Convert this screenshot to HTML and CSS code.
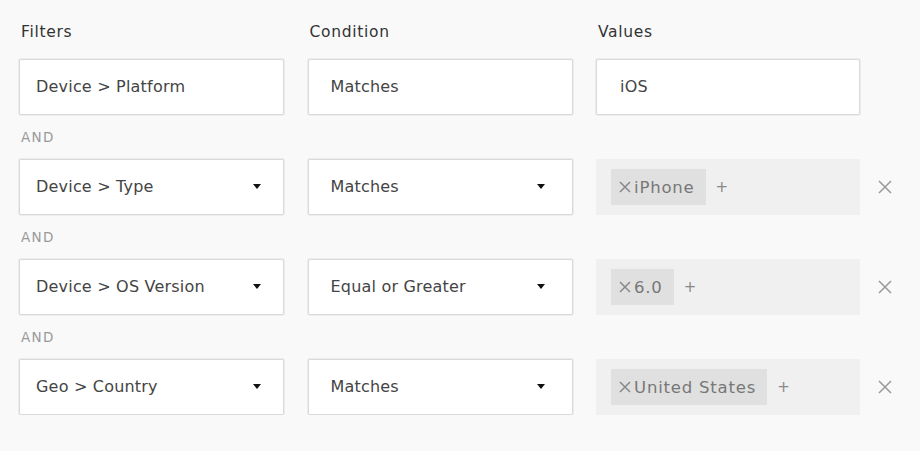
FILE: index.html
```html
<!DOCTYPE html>
<html>
<head>
  <meta charset="utf-8">
  <title>Segment Filters</title>
  <link rel="stylesheet" href="styles.css">
</head>
<body class="sf-page">

<div class="sf-grid">
  <div class="sf-head">Filters</div>
  <div class="sf-head">Condition</div>
  <div class="sf-head">Values</div>
  <div></div>

  <div class="sf-box sf-filter">Device &gt; Platform</div>
  <div class="sf-box sf-cond">Matches</div>
  <div class="sf-box sf-plain">iOS</div>
  <div></div>

  <div class="sf-and">AND</div>

  <div class="sf-box sf-filter">Device &gt; Type <span class="sf-caret"></span></div>
  <div class="sf-box sf-cond">Matches <span class="sf-caret"></span></div>
  <div class="sf-tags">
    <span class="sf-tag"><svg class="sf-x" viewBox="0 0 12 12"><path d="M1 1L11 11M11 1L1 11"/></svg>iPhone</span>
    <span class="sf-add">+</span>
  </div>
  <div class="sf-remove"><svg viewBox="0 0 14 14"><path d="M1 1L13 13M13 1L1 13"/></svg></div>

  <div class="sf-and">AND</div>

  <div class="sf-box sf-filter">Device &gt; OS Version <span class="sf-caret"></span></div>
  <div class="sf-box sf-cond">Equal or Greater <span class="sf-caret"></span></div>
  <div class="sf-tags">
    <span class="sf-tag"><svg class="sf-x" viewBox="0 0 12 12"><path d="M1 1L11 11M11 1L1 11"/></svg>6.0</span>
    <span class="sf-add">+</span>
  </div>
  <div class="sf-remove"><svg viewBox="0 0 14 14"><path d="M1 1L13 13M13 1L1 13"/></svg></div>

  <div class="sf-and">AND</div>

  <div class="sf-box sf-filter">Geo &gt; Country <span class="sf-caret"></span></div>
  <div class="sf-box sf-cond">Matches <span class="sf-caret"></span></div>
  <div class="sf-tags">
    <span class="sf-tag"><svg class="sf-x" viewBox="0 0 12 12"><path d="M1 1L11 11M11 1L1 11"/></svg>United States</span>
    <span class="sf-add">+</span>
  </div>
  <div class="sf-remove"><svg viewBox="0 0 14 14"><path d="M1 1L13 13M13 1L1 13"/></svg></div>
</div>

</body>
</html>
```

FILE: styles.css
```css
*,
*::before,
*::after {
  box-sizing: border-box;
}

.sf-page {
  margin: 0;
  padding: 22px 0 0 19px;
  background: #f9f9f9;
  font-family: "DejaVu Sans", sans-serif;
  color: #444;
}

.sf-grid {
  display: grid;
  grid-template-columns: 265px 265px 264px 32px;
  column-gap: 23.5px;
}

.sf-head {
  font-size: 15.5px;
  line-height: 20px;
  letter-spacing: 0.7px;
  color: #333;
  margin-bottom: 17px;
  padding-left: 2px;
}

.sf-and {
  grid-column: 1 / -1;
  height: 44px;
  line-height: 44px;
  font-size: 13.5px;
  letter-spacing: 1.3px;
  color: #999;
  padding-left: 2px;
}

.sf-box {
  height: 56px;
  display: flex;
  align-items: center;
  justify-content: space-between;
  background: #fff;
  border: 1px solid #dadada;
  box-shadow: 0 0 0 1px #ececec;
  border-radius: 2px;
  font-size: 16px;
  letter-spacing: 0.2px;
  color: #444;
  padding-bottom: 1px;
}

.sf-filter {
  padding-left: 16px;
  padding-right: 22px;
}

.sf-cond {
  padding-left: 22px;
  padding-right: 27px;
}

.sf-plain {
  padding-left: 23px;
  padding-right: 23px;
}

.sf-caret {
  width: 0;
  height: 0;
  border-left: 4px solid transparent;
  border-right: 4px solid transparent;
  border-top: 5px solid #111;
}

.sf-tags {
  height: 56px;
  display: flex;
  align-items: center;
  gap: 10px;
  padding-left: 15px;
  background: #f0f0f0;
  font-size: 16.5px;
  letter-spacing: 0.8px;
  color: #777;
}

.sf-tag {
  height: 36px;
  display: flex;
  align-items: center;
  padding: 0 11px 0 8px;
  background: #e0e0e0;
}

.sf-x {
  width: 12px;
  height: 12px;
  margin-right: 3px;
  fill: none;
  stroke: #888;
  stroke-width: 1.5;
}

.sf-add {
  font-size: 15px;
  color: #888;
}

.sf-remove {
  display: flex;
  align-items: center;
  margin-left: -5.5px;
}

.sf-remove svg {
  width: 14px;
  height: 14px;
  fill: none;
  stroke: #999;
  stroke-width: 1.5;
}
```
